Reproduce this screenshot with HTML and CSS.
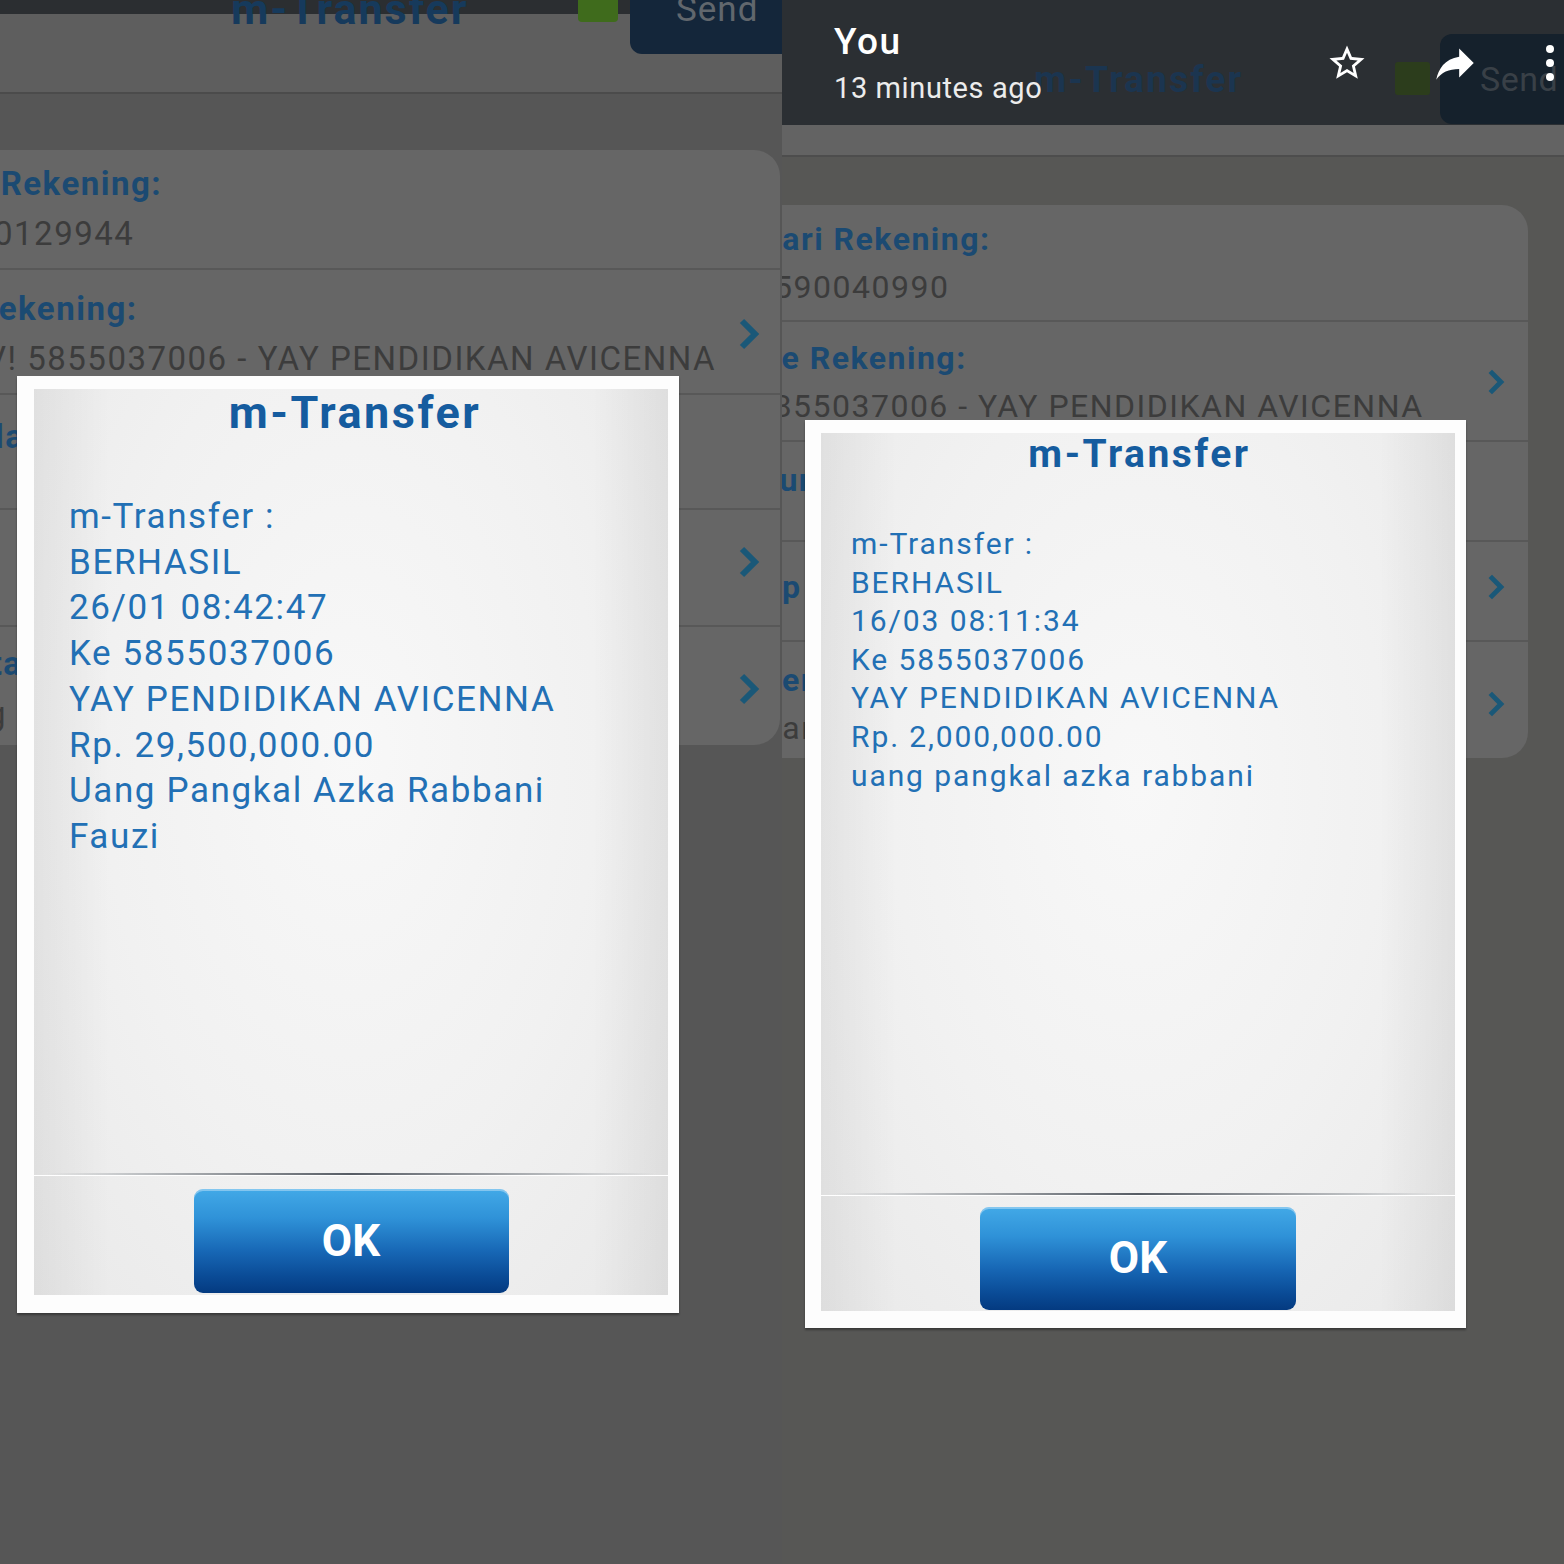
FILE: index.html
```html
<!DOCTYPE html>
<html lang="id">
<head>
<meta charset="utf-8">
<title>m-Transfer</title>
<link rel="stylesheet" href="styles.css">
</head>
<body>
<main class="collage">

  <section class="phone phone-a">
    <header class="hdr hdr-a">
      <h1 class="hdr-title">m-Transfer</h1>
      <span class="hdr-led"></span>
      <span class="hdr-send">Send</span>
    </header>

    <div class="card card-a">
      <div class="row">
        <div class="row-text">
          <div class="lbl">Dari Rekening:</div>
          <div class="val val-cut">0129944</div>
        </div>
      </div>
      <div class="row">
        <div class="row-text">
          <div class="lbl">Ke Rekening:</div>
          <div class="val val-cut2">V! 5855037006 - YAY PENDIDIKAN AVICENNA</div>
        </div>
        <svg class="chev" viewBox="0 0 22 34"><polyline points="4,4 17,17 4,30"/></svg>
      </div>
      <div class="row row-top">
        <div class="row-text">
          <div class="lbl">Jumlah</div>
        </div>
      </div>
      <div class="row">
        <div class="row-text"></div>
        <svg class="chev" viewBox="0 0 22 34"><polyline points="4,4 17,17 4,30"/></svg>
      </div>
      <div class="row">
        <div class="row-text">
          <div class="lbl">Berita</div>
          <div class="val">Uang</div>
        </div>
        <svg class="chev" viewBox="0 0 22 34"><polyline points="4,4 17,17 4,30"/></svg>
      </div>
    </div>

    <div class="dialog dialog-a">
      <div class="dlg-in">
        <h2 class="dlg-title">m-Transfer</h2>
        <p class="dlg-msg">m-Transfer :<br>BERHASIL<br>26/01 08:42:47<br>Ke 5855037006<br>YAY PENDIDIKAN AVICENNA<br>Rp. 29,500,000.00<br>Uang Pangkal Azka Rabbani<br>Fauzi</p>
        <div class="dlg-sep"></div>
        <div class="dlg-foot"><button class="ok-btn" type="button">OK</button></div>
      </div>
    </div>
  </section>

  <section class="phone phone-b">
    <header class="hdr hdr-b">
      <h1 class="hdr-title">m-Transfer</h1>
      <span class="hdr-led"></span>
      <span class="hdr-send">Send</span>
    </header>

    <div class="card card-b">
      <div class="row">
        <div class="row-text">
          <div class="lbl">Dari Rekening:</div>
          <div class="val val-cut">590040990</div>
        </div>
      </div>
      <div class="row">
        <div class="row-text">
          <div class="lbl">Ke Rekening:</div>
          <div class="val val-cut2">5855037006 - YAY PENDIDIKAN AVICENNA</div>
        </div>
        <svg class="chev" viewBox="0 0 22 34"><polyline points="4,4 17,17 4,30"/></svg>
      </div>
      <div class="row">
        <div class="row-text">
          <div class="lbl">Jumlah</div>
        </div>
      </div>
      <div class="row">
        <div class="row-text">
          <div class="lbl lbl-frag">p</div>
        </div>
        <svg class="chev" viewBox="0 0 22 34"><polyline points="4,4 17,17 4,30"/></svg>
      </div>
      <div class="row">
        <div class="row-text">
          <div class="lbl">Berita</div>
          <div class="val">Uang</div>
        </div>
        <svg class="chev" viewBox="0 0 22 34"><polyline points="4,4 17,17 4,30"/></svg>
      </div>
    </div>

    <div class="viewer-bar">
      <div class="viewer-who">
        <span class="viewer-name">You</span>
        <span class="viewer-time">13 minutes ago</span>
      </div>
      <svg class="viewer-star" viewBox="0 0 24 24"><path d="M22 9.24l-7.19-.62L12 2 9.19 8.63 2 9.24l5.46 4.73L5.82 21 12 17.27 18.18 21l-1.63-7.03L22 9.24zM12 15.4l-3.76 2.27 1-4.28-3.32-2.88 4.38-.38L12 6.1l1.71 4.04 4.38.38-3.32 2.88 1 4.28L12 15.4z"/></svg>
      <svg class="viewer-share" viewBox="0 0 24 24"><path d="M14 9V5l7 7-7 7v-4.1c-5 0-8.5 1.6-11 5.1 1-5 4-10 11-11z"/></svg>
      <svg class="viewer-more" viewBox="0 0 10 40"><circle cx="5" cy="6" r="4"/><circle cx="5" cy="20" r="4"/><circle cx="5" cy="34" r="4"/></svg>
    </div>

    <div class="dialog dialog-b">
      <div class="dlg-in">
        <h2 class="dlg-title">m-Transfer</h2>
        <p class="dlg-msg">m-Transfer :<br>BERHASIL<br>16/03 08:11:34<br>Ke 5855037006<br>YAY PENDIDIKAN AVICENNA<br>Rp. 2,000,000.00<br>uang pangkal azka rabbani</p>
        <div class="dlg-sep"></div>
        <div class="dlg-foot"><button class="ok-btn" type="button">OK</button></div>
      </div>
    </div>
  </section>

</main>
</body>
</html>
```

FILE: styles.css
```css
* { box-sizing: border-box; }
html, body { margin: 0; padding: 0; }
body {
  background: #565656;
  font-family: Roboto, "Noto Sans", "Liberation Sans", sans-serif;
}
.collage { display: flex; width: 1564px; height: 1564px; }
.phone {
  position: relative;
  flex: none;
  width: 782px;
  height: 1564px;
  overflow: hidden;
}
.phone-a { background: #565656; }
.phone-b { background: #575755; }

/* ---------- dimmed app header ---------- */
.hdr { display: flex; align-items: flex-start; }
.hdr-title { margin: 0; font-weight: 700; white-space: nowrap; }
.hdr-led { flex: none; margin-left: auto; }
.hdr-send { flex: none; white-space: nowrap; }

.hdr-a {
  height: 94px;
  background: linear-gradient(#2b2e31 0 14px, #5e5e5e 14px 92px, #4b4b4b 92px);
}
.hdr-a .hdr-title {
  margin-left: 231px;
  font-size: 43px;
  letter-spacing: 2px;
  line-height: 18px;
  color: #163a5c;
}
.hdr-a .hdr-led {
  width: 40px;
  height: 22px;
  background: #3f6b1c;
  border-radius: 0 0 4px 4px;
}
.hdr-a .hdr-send {
  margin: 0 -12px 0 12px;
  width: 164px;
  height: 54px;
  padding-left: 46px;
  background: #14263a;
  border-radius: 0 0 0 12px;
  font-size: 35px;
  letter-spacing: 1px;
  line-height: 20px;
  color: #61676d;
}

.hdr-b {
  height: 157px;
  background: linear-gradient(#2b2f33 0 125px, #636363 125px 155px, #4d4d4d 155px);
}
.hdr-b .hdr-title {
  margin: 58px 0 0 252px;
  font-size: 37px;
  letter-spacing: 2.2px;
  line-height: 44px;
  color: #1b3550;
}
.hdr-b .hdr-led {
  margin-top: 62px;
  width: 35px;
  height: 33px;
  background: #2c3d1c;
  border-radius: 3px;
}
.hdr-b .hdr-send {
  margin: 34px -20px 0 10px;
  width: 144px;
  height: 90px;
  padding-left: 40px;
  background: #15212c;
  border-radius: 12px 0 0 12px;
  font-size: 34px;
  letter-spacing: 0.5px;
  line-height: 90px;
  color: #394047;
}

/* ---------- dimmed form card ---------- */
.card { background: #666666; border-radius: 0 26px 26px 0; }
.card-a { margin: 56px 0 0 -100px; width: 880px; }
.card-b { margin: 48px 0 0 -60px; width: 806px; }

.row {
  display: flex;
  align-items: center;
  border-top: 2px solid #585858;
  white-space: nowrap;
}
.row:first-child { border-top: 0; }
.row-text { flex: 1; min-width: 0; }
.lbl { font-weight: 700; color: #1b4a72; }
.val { color: #3c3c3c; }

.phone-a .row {
  height: 118px;
  padding: 0 20px 0 25px;
  font-size: 33px;
  letter-spacing: 1.5px;
  line-height: 50px;
}
.phone-a .row:nth-child(2) { height: 125px; padding-top: 4px; }
.phone-a .row:nth-child(3) { height: 115px; }
.phone-a .row:nth-child(4) { height: 117px; padding-bottom: 12px; }
.phone-a .row:nth-child(5) { height: 120px; padding-top: 6px; }
.phone-a .val-cut { margin-left: 69px; }
.phone-a .val-cut2 { margin-left: 60px; }
.phone-a .row-top { align-items: flex-start; padding-top: 17px; }

.phone-b .row {
  height: 115px;
  padding: 0 23px 0 38px;
  font-size: 32px;
  letter-spacing: 1.5px;
  line-height: 48px;
}
.phone-b .row:nth-child(2) { height: 120px; padding-top: 2px; }
.phone-b .row:nth-child(3) { height: 100px; }
.phone-b .row:nth-child(3) .lbl { margin-top: -22px; }
.phone-b .row:nth-child(4) { height: 100px; padding-bottom: 8px; }
.phone-b .row:nth-child(5) { height: 118px; padding-top: 8px; }
.phone-b .val-cut { margin-left: 14px; }
.phone-b .val-cut2 { margin-left: -6px; }
.phone-b .lbl-frag { margin-left: 22px; margin-top: 0; }

.chev { flex: none; width: 22px; height: 34px; }
.chev polyline { fill: none; stroke: #1a5878; stroke-width: 6; }
.phone-b .chev { width: 18px; height: 30px; }

/* ---------- photo viewer bar (overlay) ---------- */
.viewer-bar {
  position: absolute;
  top: 0;
  left: 0;
  right: 0;
  height: 125px;
  display: flex;
  align-items: center;
  padding: 0 9px 0 52px;
  color: #ffffff;
}
.viewer-who { display: flex; flex-direction: column; }
.viewer-name {
  font-size: 37px;
  font-weight: 500;
  letter-spacing: 1.5px;
  line-height: 44px;
}
.viewer-time {
  margin-top: 6px;
  font-size: 29px;
  letter-spacing: 0.6px;
  line-height: 36px;
  color: #ececec;
}
.viewer-star { margin-left: auto; width: 42px; height: 42px; fill: #ffffff; }
.viewer-share { margin-left: 62px; width: 50px; height: 50px; fill: #ffffff; }
.viewer-more { margin-left: 65px; width: 10px; height: 40px; fill: #ffffff; }

/* ---------- dialog ---------- */
.dialog {
  position: absolute;
  background: #fdfdfd;
  box-shadow: 0 2px 2px rgba(0, 0, 0, 0.35);
}
.dialog-a { left: 17px; top: 376px; width: 662px; height: 937px; padding: 13px 11px 18px 17px; }
.dialog-b { left: 23px; top: 420px; width: 661px; height: 908px; padding: 13px 11px 17px 16px; }

.dlg-in {
  height: 100%;
  display: flex;
  flex-direction: column;
  background:
    linear-gradient(90deg, rgba(0,0,0,0.05), rgba(0,0,0,0) 12%, rgba(0,0,0,0) 88%, rgba(0,0,0,0.06)),
    radial-gradient(ellipse at 50% 40%, #f8f8f8 0%, #f1f1f1 55%, #e9e9e9 100%);
}
.dlg-title {
  margin: 0;
  text-align: center;
  font-weight: 700;
  color: #155c9f;
  white-space: nowrap;
}
.dlg-msg { margin: 0; color: #2270b5; white-space: nowrap; }

.dialog-a .dlg-title { padding-left: 8px; font-size: 45px; letter-spacing: 2.5px; line-height: 48px; }
.dialog-a .dlg-msg { margin-top: 57px; padding-left: 35px; font-size: 35px; letter-spacing: 1.6px; line-height: 45.7px; }
.dialog-b .dlg-title { padding-left: 3px; font-size: 39px; letter-spacing: 2.5px; line-height: 42px; }
.dialog-b .dlg-msg { margin-top: 50px; padding-left: 30px; font-size: 30px; letter-spacing: 1.9px; line-height: 38.6px; }

.dlg-sep {
  flex: none;
  margin-top: auto;
  height: 2px;
  background: linear-gradient(90deg, rgba(150,155,160,0) 2%, rgba(150,155,160,0.5) 15%, #565c64 50%, rgba(150,155,160,0.5) 85%, rgba(150,155,160,0) 98%);
  box-shadow: 0 1px 0 #ffffff;
}
.dlg-foot { display: flex; justify-content: center; }
.dialog-a .dlg-foot { padding: 14px 0 2px; }
.dialog-b .dlg-foot { padding: 12px 0 1px; }

.ok-btn {
  width: 315px;
  height: 104px;
  padding: 0;
  border: 0;
  border-radius: 9px;
  background: linear-gradient(#42a9e7 0%, #2f92d8 28%, #1767b5 60%, #0a4b96 84%, #043a80 100%);
  box-shadow: inset 0 2px 0 rgba(255, 255, 255, 0.35);
  color: #ffffff;
  font-family: Roboto, "Noto Sans", "Liberation Sans", sans-serif;
  font-size: 44px;
  font-weight: 700;
  line-height: 104px;
}
.dialog-b .ok-btn { width: 316px; height: 103px; line-height: 103px; }
```
